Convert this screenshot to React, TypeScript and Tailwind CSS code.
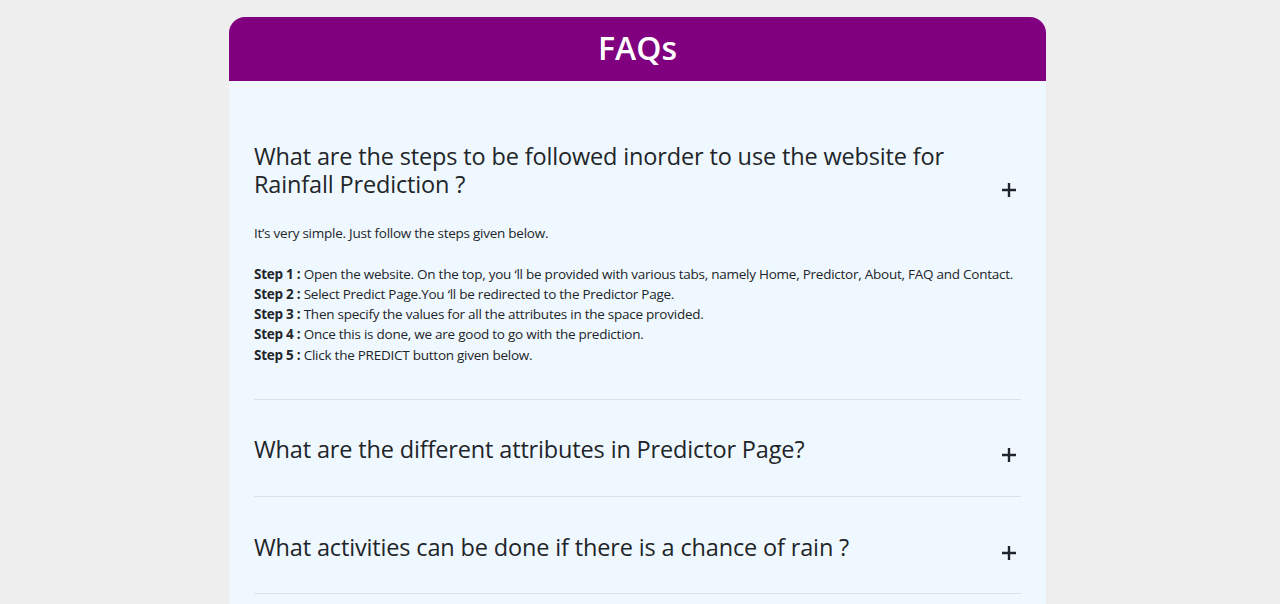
import React from "react";

function Plus() {
  return (
    <svg width="16" height="16" viewBox="0 0 16 16" className="shrink-0">
      <path d="M8 1v14M1 8h14" stroke="#212529" strokeWidth="2.4" />
    </svg>
  );
}

function Question({ children }: { children: React.ReactNode }) {
  return (
    <div className="flex items-end justify-between">
      <h3 className="text-[23.5px] leading-[28px] tracking-[-0.15px] font-medium text-[#212529] max-w-[720px]">{children}</h3>
      <div className="mr-[4px] mb-[0px]">
        <Plus />
      </div>
    </div>
  );
}

export default function App() {
  const steps = [
    "Open the website. On the top, you ‘ll be provided with various tabs, namely Home, Predictor, About, FAQ and Contact.",
    "Select Predict Page.You ‘ll be redirected to the Predictor Page.",
    "Then specify the values for all the attributes in the space provided.",
    "Once this is done, we are good to go with the prediction.",
    "Click the PREDICT button given below.",
  ];
  return (
    <div className="min-h-[604px] bg-[#eeeeee] pt-[17px]" style={{ fontFamily: '"Open Sans", "Noto Sans", sans-serif' }}>
      <div className="ml-[229px] w-[817px] rounded-t-[16px] overflow-hidden bg-[#f0f8ff] pb-[20px]">
        <div className="h-[64px] bg-[#800080] flex items-center justify-center">
          <h1 className="text-white text-[32px] font-semibold leading-none mt-[-2px]">FAQs</h1>
        </div>
        <div className="px-[25px] pt-[61px]">
          <div className="border-b border-[#dee2e6] pb-[34px]">
            <Question>
              What are the steps to be followed inorder to use the website for Rainfall Prediction ?
            </Question>
            <div className="mt-[25px] text-[13.5px] leading-[20.3px] tracking-[-0.25px] text-[#212529]">
              <p>It’s very simple. Just follow the steps given below.</p>
              <br />
              {steps.map((s, i) => (
                <p key={i}>
                  <b className="font-bold">Step {i + 1} :</b> {s}
                </p>
              ))}
            </div>
          </div>
          <div className="border-b border-[#dee2e6] pt-[35px] pb-[33px]">
            <Question>What are the different attributes in Predictor Page?</Question>
          </div>
          <div className="border-b border-[#dee2e6] pt-[36px] pb-[32px]">
            <Question>What activities can be done if there is a chance of rain ?</Question>
          </div>
        </div>
      </div>
    </div>
  );
}
